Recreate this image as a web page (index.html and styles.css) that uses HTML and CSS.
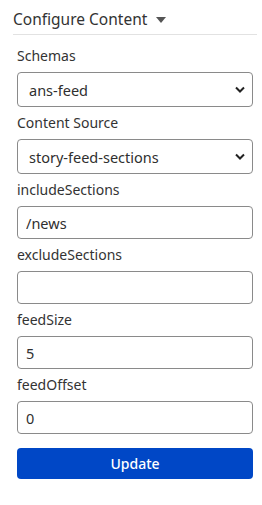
FILE: index.html
```html
<!DOCTYPE html>
<html lang="en">
<head>
  <meta charset="UTF-8">
  <meta name="viewport" content="width=device-width, initial-scale=1.0">
  <title>Configure Content</title>
  <link rel="stylesheet" href="styles.css">
</head>
<body>
  <div class="panel">
    <div class="panel-header">
      <span class="panel-title">Configure Content</span>
      <svg class="caret" width="10" height="6" viewBox="0 0 10 6"><path d="M0 0h10L5 6z" fill="#555"/></svg>
    </div>

    <form class="form">
      <div class="field">
        <label for="schemas">Schemas</label>
        <select id="schemas">
          <option>ans-feed</option>
        </select>
      </div>
      <div class="field">
        <label for="source">Content Source</label>
        <select id="source">
          <option>story-feed-sections</option>
        </select>
      </div>
      <div class="field">
        <label for="include">includeSections</label>
        <input id="include" type="text" value="/news">
      </div>
      <div class="field">
        <label for="exclude">excludeSections</label>
        <input id="exclude" type="text" value="">
      </div>
      <div class="field">
        <label for="size">feedSize</label>
        <input id="size" type="text" value="5">
      </div>
      <div class="field">
        <label for="offset">feedOffset</label>
        <input id="offset" type="text" value="0">
      </div>
      <button type="button" class="update">Update</button>
    </form>
  </div>
</body>
</html>
```

FILE: styles.css
```css
body {
  margin: 0;
  font-family: "Noto Sans", "Open Sans", sans-serif;
  color: #2f2f2f;
  background: #fff;
}
.panel {
  padding: 4px 5px 0 13px;
}
.panel-header {
  display: flex;
  align-items: center;
  height: 30px;
  border-bottom: 1px solid #e2e2e2;
}
.panel-title {
  font-size: 15.5px;
  color: #333;
}
.caret {
  margin-left: 9px;
  margin-top: 1px;
}
.form {
  padding: 11px 5px 0 4px;
}
.field {
  margin-bottom: 6px;
}
label {
  display: block;
  height: 20px;
  line-height: 20px;
  font-size: 14px;
  color: #333;
  margin-bottom: 6px;
}
select,
input {
  display: block;
  box-sizing: border-box;
  width: 236px;
  height: 33px;
  margin: 0;
  border: 1px solid #8a8a8a;
  border-radius: 4px;
  background: #fff;
  font-family: inherit;
  font-size: 14.5px;
  color: #2f2f2f;
}
input {
  padding: 0 8px;
}
select {
  height: 35px;
  padding: 0 11px;
  appearance: none;
  background-image: url("data:image/svg+xml,%3Csvg xmlns='http://www.w3.org/2000/svg' width='10' height='7' viewBox='0 0 10 7'%3E%3Cpath d='M1 1.5l4 4 4-4' fill='none' stroke='%23222' stroke-width='2'/%3E%3C/svg%3E");
  background-repeat: no-repeat;
  background-position: right 7px center;
}
.update {
  display: block;
  width: 236px;
  height: 31px;
  margin-top: 14px;
  border: none;
  border-radius: 4px;
  background: #0047c6;
  color: #fff;
  font-family: inherit;
  font-size: 14px;
  font-weight: 500;
  cursor: pointer;
}
```
